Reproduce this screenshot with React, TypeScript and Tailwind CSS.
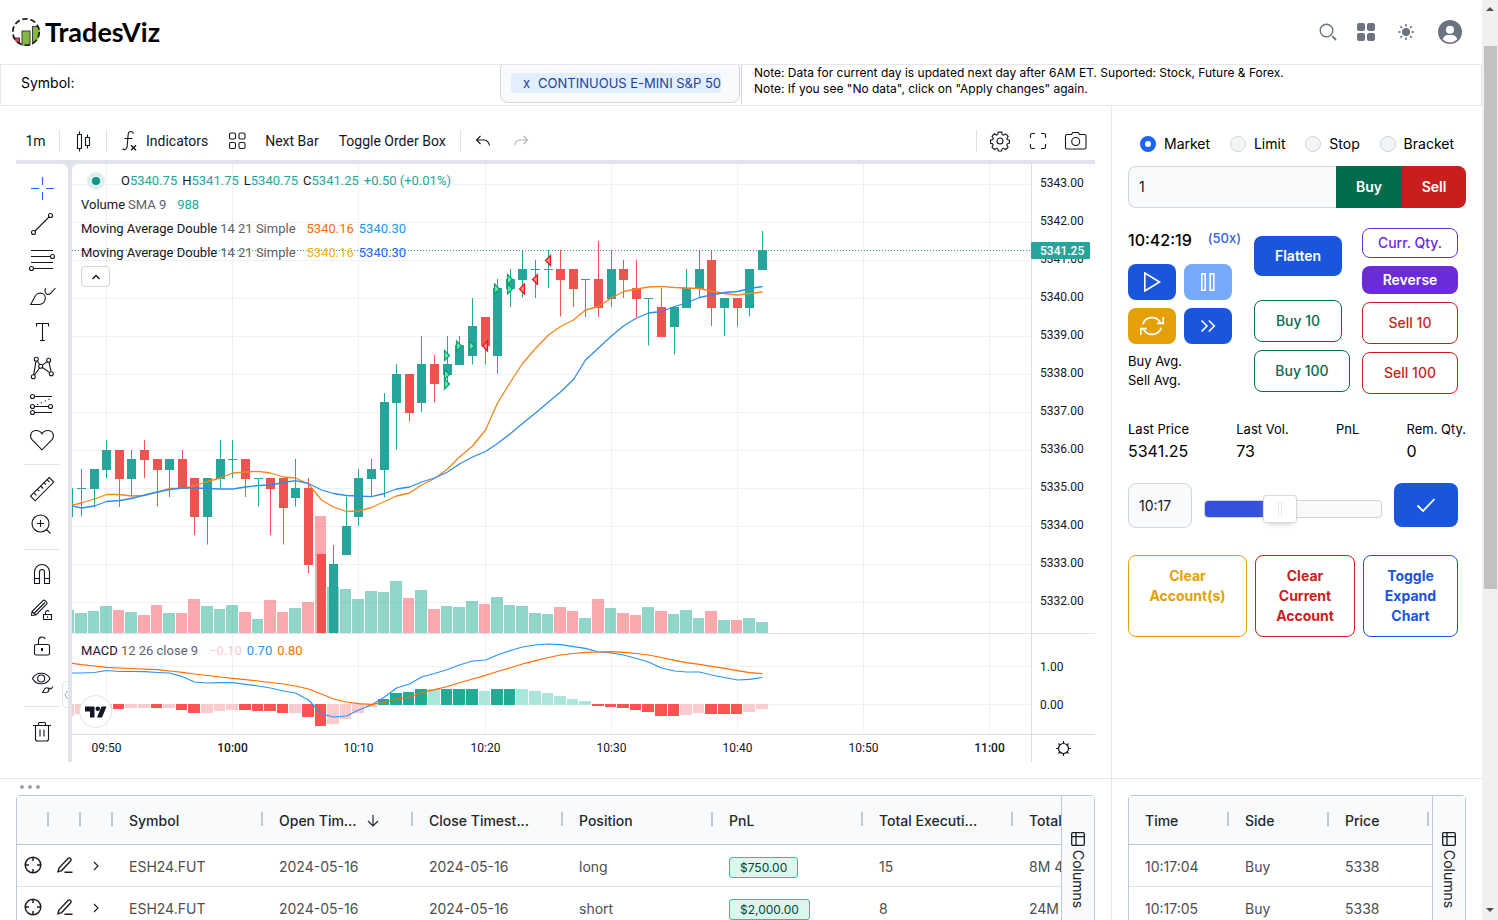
import React from "react";
import { clsx } from "clsx";

type Candle = [open: number, close: number, high: number, low: number, volume: number];

const FIRST = -13;
const STEP = 12.61;
const TOP = 164;

// minutes relative to 10:00, prices are offsets from 5300
const CANDLES: Candle[] = [
  [34.25, 35, 35, 34.25, 23],
  [35, 35, 35.5, 34.25, 20],
  [35, 35.5, 35.5, 34.5, 22],
  [35.5, 36, 36.25, 35.25, 27],
  [36, 35.25, 36, 34.5, 23],
  [35.25, 35.75, 36, 34.75, 21],
  [36, 35.75, 36.25, 35.25, 18],
  [35.75, 35.5, 35.75, 34.5, 28],
  [35.5, 35.75, 35.75, 34.75, 20],
  [35.75, 35, 36, 35, 20],
  [35.25, 34.25, 35.25, 33.75, 34],
  [34.25, 35.25, 35.25, 33.5, 27],
  [35.25, 35.75, 36.25, 35, 24],
  [35.75, 35.75, 36.25, 35.25, 28],
  [35.75, 35.25, 35.75, 34.75, 21],
  [35.25, 35.25, 35.25, 34.5, 14],
  [35.25, 35, 35.25, 33.75, 33],
  [35.25, 34.5, 35.25, 33.5, 21],
  [34.75, 35, 35.75, 34.5, 25],
  [35, 33, 35.25, 32.75, 31],
  [33.25, 31, 33.25, 31, 117],
  [31, 33, 33.5, 31, 46],
  [33.25, 34, 34.75, 33.25, 44],
  [34.25, 35.25, 35.5, 34, 34],
  [35.25, 35.5, 35.75, 34.75, 42],
  [35.5, 37.25, 37.5, 34.75, 41],
  [37.25, 38, 38.25, 36, 52],
  [38, 37, 38, 36.75, 35],
  [37.25, 38.25, 39, 37, 43],
  [38.25, 37.75, 38.5, 37.25, 24],
  [38, 38.25, 39, 37.75, 27],
  [38.25, 38.75, 39, 38.25, 26],
  [38.5, 39.25, 40, 38.25, 32],
  [39.5, 38.75, 39.5, 38.25, 29],
  [38.5, 40.25, 40.5, 38, 36],
  [40.25, 40.5, 40.75, 39.75, 28],
  [40.5, 40.75, 41.25, 40, 27],
  [40.75, 40.75, 41, 40, 20],
  [40.75, 40.75, 41.25, 40.25, 19],
  [40.75, 40.5, 41.25, 39.5, 26],
  [40.75, 40.25, 40.75, 39.75, 22],
  [40.5, 40.5, 40.5, 39.5, 15],
  [40.5, 39.75, 41.5, 39.5, 34],
  [40, 40.75, 41.25, 39.75, 25],
  [40.75, 40.5, 41, 40, 20],
  [40.25, 40, 41, 39.5, 18],
  [40, 40, 40, 38.75, 26],
  [39.75, 39, 40.25, 39, 22],
  [39.25, 39.75, 39.75, 38.5, 19],
  [39.75, 40.25, 40.75, 39.75, 23],
  [40.25, 40.75, 41.25, 40, 15],
  [41, 39.75, 41.25, 39.25, 22],
  [39.75, 40, 40, 39, 13],
  [40, 39.75, 40, 39.25, 13],
  [39.75, 40.75, 40.75, 39.5, 15],
  [40.75, 41.25, 41.75, 40.75, 11],
];

const MA_FAST = [
  506, 503, 499, 494.5, 494.5, 496, 495.5, 492, 488.5, 488.3, 486, 481.5, 478, 473, 472, 471.3, 473, 477,
  478, 484, 500, 507, 511.5, 511, 507.5, 501.5, 496, 493, 485, 478.5, 469, 457, 446, 430, 403, 382, 363.5,
  348.5, 335, 326.5, 320, 310, 306.5, 298, 291.5, 289, 287, 286.3, 287.5, 288, 288.5, 291, 293.5, 295,
  293.5, 292,
];

const MA_SLOW = [
  505, 508, 506, 501.5, 500.5, 498.5, 495, 492, 489.5, 488, 488, 488.5, 489, 489, 487, 485.5, 485, 482.5,
  480.7, 483.5, 490, 493.5, 495.5, 496, 496.7, 493.5, 489, 487, 482, 478, 472, 464, 457, 451.5, 443.5,
  433.5, 423.5, 413, 402, 392, 379.5, 360, 348, 336, 326, 318, 313, 311.5, 306.5, 303, 297.5, 295, 292.5,
  291.5, 288.5, 286.5,
];

const MACD_LINE = [
  673, 673, 672.5, 670.5, 671.5, 671.5, 671.7, 672.5, 673, 676.7, 682, 683, 682.7, 682.7, 684.3, 686, 688,
  691, 693, 700, 714, 717, 716, 710, 705, 697, 688, 684, 677, 673.5, 669.5, 665, 661, 660, 655, 650.5, 647,
  645, 644, 644.7, 646.7, 648.3, 652, 653, 655, 658.5, 662, 668, 671, 672, 672, 675, 677.5, 680, 679.3,
  677.5,
];

const SIGNAL_LINE = [
  663, 664.7, 666, 667.3, 668, 668.5, 669.1, 669.7, 671, 672.3, 674, 675.5, 677, 678.3, 679.6, 681, 682.5,
  684, 686, 689, 694, 699, 702, 703.7, 704.3, 702.5, 699, 697, 692.7, 689.6, 686.5, 682.8, 679, 675.3,
  671.5, 667.8, 664, 660.7, 657.5, 655, 653.5, 652.4, 652, 651.7, 652.3, 653.5, 655, 657.5, 660.3, 662.7,
  664.3, 666.3, 668.3, 670.7, 672.7, 673.7,
];

const HISTOGRAM = [
  -12, -10, -8, -6, -5, -4, -4, -4, -4, -6, -9, -9, -7, -6, -6, -7, -7, -9, -9, -13, -22, -20, -15, -9, -3,
  6, 12, 13, 16, 16, 16, 16, 16, 14, 16, 16, 16, 14, 12, 9, 6, 4, -2, -3, -4, -6, -8, -12, -12, -11, -9,
  -10, -10, -10, -8, -5,
];

// bars drawn in the strong colour, the rest are fading
const STRONG = [
  -9, -6, -4, -3, 1, 2, 3, 4, 6, 7, 12, 13, 14, 15, 17, 18, 19, 21, 22, 29, 30, 31, 32, 33, 34, 35, 38, 39,
  40,
];

const FILLS: [number, number, "buy" | "sell"][] = [
  [17, 38.5, "buy"],
  [17, 38, "buy"],
  [17, 37.75, "buy"],
  [18, 38.75, "buy"],
  [19, 38.75, "buy"],
  [20, 38.75, "sell"],
  [21, 40.25, "buy"],
  [22, 40.5, "buy"],
  [22, 40.25, "buy"],
  [23, 40.25, "sell"],
  [24, 40.5, "sell"],
  [25, 41, "sell"],
];

const timeX = (i: number) => Math.floor(160.8 + STEP * i) + 0.5;
const priceY = (p: number) => 20.5 + (43 - p) * 38;

const toPoints = (ys: number[]) => ys.map((y, n) => `${timeX(n + FIRST)},${y - TOP}`).join(" ");

const PRICES = [43, 42, 41, 40, 39, 38, 37, 36, 35, 34, 33, 32];
const TIMES = [
  { at: -10, label: "09:50" },
  { at: 0, label: "10:00", bold: true },
  { at: 10, label: "10:10" },
  { at: 20, label: "10:20" },
  { at: 30, label: "10:30" },
  { at: 40, label: "10:40" },
  { at: 50, label: "10:50" },
  { at: 60, label: "11:00", bold: true },
];

const Plot = () => {
  return (
    <svg className="block w-full h-[598px]" role="img" aria-label="Price chart">
      <g stroke="#f0f1f2">
        {TIMES.map((t) => (
          <line key={t.label} x1={timeX(t.at)} x2={timeX(t.at)} y1="0" y2="570" />
        ))}
        {PRICES.map((p) => (
          <line key={p} x1="0" x2="100%" y1={priceY(p)} y2={priceY(p)} />
        ))}
        <line x1="0" x2="100%" y1="502.5" y2="502.5" />
        <line x1="0" x2="100%" y1="540.5" y2="540.5" />
      </g>

      {CANDLES.map(([open, close, , , volume], n) => {
        const x = timeX(n + FIRST);
        return (
          <rect
            key={n}
            x={x - 6.5}
            y={469 - volume}
            width={timeX(n + FIRST + 1) - x - 1}
            height={volume}
            fill={close >= open ? "#22ab94" : "#f7525f"}
            fillOpacity="0.5"
          />
        );
      })}

      {CANDLES.map(([open, close, high, low], n) => {
        const x = timeX(n + FIRST);
        const top = Math.ceil(priceY(Math.max(open, close))) - 1;
        const bottom = Math.min(469, Math.ceil(priceY(Math.min(open, close))));
        const color = close >= open ? "#26a69a" : "#ef5350";
        return (
          <g key={n} fill={color}>
            <rect
              x={x - 0.5}
              y={Math.ceil(priceY(high)) - 1}
              width="1"
              height={Math.min(469, priceY(low)) - priceY(high)}
            />
            <rect x={x - 4.5} y={top} width="9" height={bottom - top} />
          </g>
        );
      })}

      <g fill="none" strokeLinejoin="round">
        <polyline points={toPoints(MA_FAST)} stroke="#f7861b" strokeWidth="1.3" />
        <polyline points={toPoints(MA_SLOW)} stroke="#2f8cf0" strokeWidth="1.3" />
      </g>

      {FILLS.map(([i, price, side]) => (
        <path
          key={`${i}-${price}`}
          transform={`translate(${timeX(i) - 0.5} ${priceY(price)})`}
          d={side === "buy" ? "M-2.5 -5L2.5 0L-2.5 5Z" : "M2.5 -5L-2.5 0L2.5 5Z"}
          fill={side === "buy" ? "#5ff0a4" : "#ff8f8f"}
          stroke={side === "buy" ? "#0c9c74" : "#f2101f"}
          strokeWidth="1.2"
        />
      ))}

      <line x1="0" x2="100%" y1="86.5" y2="86.5" stroke="#26a69a" strokeDasharray="1 2" />
      <line x1="0" x2="100%" y1="469.5" y2="469.5" stroke="#e0e3eb" />

      {HISTOGRAM.map((h, n) => {
        const i = n + FIRST;
        const x = timeX(i);
        const strong = STRONG.includes(i);
        const color = h > 0 ? (strong ? "#22ab94" : "#ace5dc") : strong ? "#ff5252" : "#fccbcd";
        return (
          <rect
            key={n}
            x={x - 6.5}
            y={h > 0 ? 541 - h : 540}
            width={timeX(i + 1) - x - 1}
            height={Math.abs(h)}
            fill={color}
          />
        );
      })}
      <g fill="none" strokeLinejoin="round">
        <polyline points={toPoints(MACD_LINE)} stroke="#2b95f5" strokeWidth="1.2" />
        <polyline points={toPoints(SIGNAL_LINE)} stroke="#ff6d00" strokeWidth="1.2" />
      </g>

      <line x1="0" x2="100%" y1="570.5" y2="570.5" stroke="#dcdde1" />
      <g fontSize="12" textAnchor="middle" fill="#131722">
        {TIMES.map((t) => (
          <text key={t.label} x={timeX(t.at)} y="588" fontWeight={t.bold ? 500 : 400}>
            {t.label}
          </text>
        ))}
      </g>
    </svg>
  );
};

const PriceAxis = () => {
  return (
    <svg className="block w-16 h-[598px] shrink-0" aria-label="Price axis">
      <line x1="0.5" x2="0.5" y1="0" y2="598" stroke="#dcdde1" />
      <g fontSize="12" fill="#131722">
        {PRICES.map((p) => (
          <text key={p} x="9" y={Math.floor(priceY(p)) + 3}>
            {`53${p}.00`}
          </text>
        ))}
        <text x="9" y="507">1.00</text>
        <text x="9" y="545">0.00</text>
      </g>
      <line x1="0" x2="64" y1="469.5" y2="469.5" stroke="#e0e3eb" />
      <line x1="0" x2="64" y1="570.5" y2="570.5" stroke="#dcdde1" />
      <rect x="0" y="78" width="59" height="17" rx="1" fill="#26a69a" />
      <text x="9" y="91" fontSize="12" fontWeight="500" fill="#fff">
        5341.25
      </text>
      <g transform="translate(32.5 584.5)" fill="none" stroke="#131722" strokeWidth="1.2">
        <circle r="5" />
        <path d="M0 -5V-7.5M0 5V7.5M-5 0H-7.5M5 0H7.5M-3.5 -3.5L-5 -5M3.5 -3.5L5 -5M-3.5 3.5L-5 5M3.5 3.5L5 5" />
      </g>
    </svg>
  );
};

interface IconProps {
  children: React.ReactNode;
  className?: string;
}

const Icon = ({ children, className }: IconProps) => (
  <svg
    viewBox="0 0 28 28"
    className={clsx("size-7 shrink-0", className)}
    fill="none"
    stroke="currentColor"
    strokeWidth="1.1"
    aria-hidden="true"
  >
    {children}
  </svg>
);

const TOOLS: { label: string; icon: React.ReactNode; divider?: boolean; active?: boolean }[] = [
  {
    label: "Cross",
    active: true,
    icon: <path d="M3 14.5h8M18 14.5h8M14.5 3v8M14.5 18v8" />,
  },
  {
    label: "Trend line",
    icon: (
      <>
        <path d="M7 21L21 7" />
        <circle cx="22.5" cy="5.5" r="2" />
        <circle cx="5.5" cy="22.5" r="2" />
      </>
    ),
  },
  {
    label: "Fib retracement",
    icon: (
      <>
        <path d="M3 4.5h22M3 10.5h19.5M3 16.5h22M5.5 22.5H25" />
        <circle cx="24.5" cy="10.5" r="2" />
        <circle cx="3.5" cy="22.5" r="2" />
      </>
    ),
  },
  {
    label: "Brush",
    icon: (
      <path d="M2.7 22.5L7 14.5C8.5 11.8 10.6 11 12.5 11C15.5 11.2 17.4 13.5 17.3 16C17 20 14.5 22.5 11 22.5ZM18 6c-1.8 2-1.2 4.7.8 6c1.5.8 2.6.5 3.6-.5L27.5 6" />
    ),
  },
  {
    label: "Text",
    icon: <path d="M8.5 8.5v-3h12v3M14.5 5.5v17M12 22.5h5" />,
  },
  {
    label: "XABCD pattern",
    icon: (
      <>
        <path d="M5.6 20.8L8 7.3M9.4 7L11.7 10.7M14.4 13.5L21.7 18.6M23 17.7L21 8.3M19.2 7.6L14.3 11.1M11.6 14L6.5 21" />
        <circle cx="8.3" cy="5.3" r="2" />
        <circle cx="20.7" cy="6.3" r="2" />
        <circle cx="12.7" cy="12.3" r="2" />
        <circle cx="23.3" cy="19.7" r="2" />
        <circle cx="5.3" cy="22.7" r="2" />
      </>
    ),
  },
  {
    label: "Long position",
    icon: (
      <>
        <path d="M6.5 6.5H24M6.5 16.5h14M6.5 22.5H24" />
        <path d="M9 14.7L23 8.5" strokeDasharray="1.2 3" />
        <circle cx="4.5" cy="6.5" r="2" />
        <circle cx="4.5" cy="16.5" r="2" />
        <circle cx="22.5" cy="16.5" r="2" />
        <circle cx="4.5" cy="22.5" r="2" />
      </>
    ),
  },
  {
    label: "Favorites",
    icon: (
      <path d="M14 23.8L4 13.6C1 10 3 4.5 8 4.5C11 4.5 13 5.8 14 7.8C15 5.8 17 4.5 20 4.5C25 4.5 27 10 24 13.6Z" />
    ),
    divider: true,
  },
  {
    label: "Measure",
    icon: (
      <path d="M2.5 21.2L21.2 2.5L25.8 7.1L7.1 25.8ZM6 17.8L8.5 20.3M9.5 14.3L11.3 16.1M12.7 11L15.2 13.5M16 7.7L17.8 9.5M19 4.7L21.5 7.2" />
    ),
  },
  {
    label: "Zoom in",
    icon: <path d="M12.5 4a8.5 8.5 0 1 0 0 17a8.5 8.5 0 1 0 0-17M18.6 18.6L22.5 22.5M12.5 9v7M9 12.5h7" />,
    divider: true,
  },
  {
    label: "Magnet",
    icon: (
      <path d="M6.5 23.5V12a7.5 7.5 0 0 1 15 0V23.5h-5V12a2.5 2.5 0 0 0-5 0V23.5ZM6.5 18.5h5M16.5 18.5h5" />
    ),
  },
  {
    label: "Stay in drawing mode",
    icon: (
      <>
        <path d="M3.5 19.5L4 15.5L15 4.6Q16 3.6 17 4.6L18.600 6.200Q19.600 7.200 18.600 8.200L8 19ZM4 15.5L8 19M6.500 17L17 6.500" />
        <path d="M15.5 18.5h8v5h-8zM17.5 18.5v-2a2 2 0 0 1 3.600-1M19.500 20.200v1.600" />
      </>
    ),
  },
  {
    label: "Lock all drawings",
    icon: (
      <>
        <path d="M8 12.5h12a1.5 1.5 0 0 1 1.5 1.5v7.500a1.500 1.500 0 0 1-1.500 1.500H8a1.500 1.500 0 0 1-1.500-1.500V14A1.500 1.500 0 0 1 8 12.500ZM10.500 12.500V8.500a3.600 3.600 0 0 1 6.800-1.500" />
        <path d="M14 16v3" strokeWidth="2" />
      </>
    ),
  },
  {
    label: "Hide all drawings",
    icon: (
      <>
        <path d="M4.5 10.5C8 3.5 18.5 3.5 22 10.5C18.5 17.5 8 17.5 4.5 10.5Z" />
        <circle cx="13.2" cy="10.5" r="3.5" />
        <path d="M14.5 24.5L17 20.5q2-1.6 3.6.2q1 2-1.2 3.6ZM21 19.5q.3 2 2.4 1L25 18.5" />
      </>
    ),
    divider: true,
  },
  {
    label: "Remove drawings",
    icon: (
      <path d="M5 8.5h18M10.5 8.5v-2a1 1 0 0 1 1-1h5a1 1 0 0 1 1 1v2M7.5 8.5v13.5a2 2 0 0 0 2 2h9a2 2 0 0 0 2-2V8.500M12 12.500v7M16 12.500v7" />
    ),
  },
];

const DrawingTools = () => {
  return (
    <div className="w-[52px] shrink-0 pt-[6px] bg-white rounded-tr-md relative overflow-hidden">
      {TOOLS.map((tool) => (
        <React.Fragment key={tool.label}>
          <button
            type="button"
            aria-label={tool.label}
            className={clsx("h-9 w-full flex items-center justify-center", {
              "text-[#2962ff]": tool.active,
              "text-[#131722]": !tool.active,
            })}
          >
            <Icon>{tool.icon}</Icon>
          </button>
          {tool.divider && <div className="h-px my-[6px] mx-2 bg-[#e0e3eb]" />}
        </React.Fragment>
      ))}
      <button
        type="button"
        aria-label="Hide drawings toolbar"
        className="absolute -right-1 top-[517px] w-[10px] h-[27px] border border-[#e0e3eb] rounded-l bg-white text-[#a3a6af]"
      >
        <svg viewBox="0 0 6 10" className="w-[6px] h-[10px]" fill="none" stroke="currentColor">
          <path d="M4.5 1L2 5L4.5 9" />
        </svg>
      </button>
    </div>
  );
};

const Divider = () => <div className="w-px h-[22px] bg-[#e0e3eb]" />;

const ChartToolbar = () => {
  return (
    <div className="h-[38px] flex items-center text-sm text-[#131722]">
      <button type="button" className="w-[43px] text-center pr-1">
        1m
      </button>
      <Divider />
      <button type="button" aria-label="Candles" className="w-[46px] flex justify-center">
        <Icon>
          <path d="M8.5 7.5h4v14h-4zM10.5 4.5v3M10.5 21.5v3M16.5 10.5h4v8h-4zM18.5 7.5v3M18.5 18.5v3" />
        </Icon>
      </button>
      <Divider />
      <button type="button" className="flex items-center pl-[9px] pr-[15px]">
        <Icon>
          <path d="M17.500 6.500q-.8-2-2.600-2q-2.600 0-2.800 3.500L11.200 19q-.3 3.600-2.600 3.600q-1.300 0-1.900-1M8.500 11.500h8" />
          <path d="M15 18.200l5 5M20 18.200l-5 5" strokeWidth="1.4" />
        </Icon>
        <span className="ml-[2px]">Indicators</span>
      </button>
      <button type="button" aria-label="Layouts">
        <Icon>
          <g transform="translate(.5 0)">
            <rect x="6" y="6" width="6" height="6" rx="1.4" />
            <rect x="15.5" y="6" width="6" height="6" rx="1.4" />
            <rect x="6" y="15.5" width="6" height="6" rx="1.4" />
            <rect x="15.5" y="15.5" width="6" height="6" rx="1.4" />
          </g>
        </Icon>
      </button>
      <button type="button" className="ml-1 px-[10px] whitespace-nowrap">
        Next Bar
      </button>
      <button type="button" className="px-[10px] whitespace-nowrap">
        Toggle Order Box
      </button>
      <div className="pl-1 pr-2">
        <Divider />
      </div>
      <button type="button" aria-label="Undo">
        <Icon>
          <path d="M11.5 9L7.5 13L11.5 17M7.5 13H15.5Q19.5 13.5 20.5 18.5" />
        </Icon>
      </button>
      <button type="button" aria-label="Redo" disabled className="ml-[10px] text-[#b2b5be]">
        <Icon>
          <path d="M16.5 9L20.5 13L16.5 17M20.5 13H12.5Q8.5 13.5 7.5 18.5" />
        </Icon>
      </button>
      <div className="ml-auto">
        <Divider />
      </div>
      <div className="flex items-center gap-[10px] pl-[9px] pr-[5px]">
        <button type="button" aria-label="Settings">
          <Icon>
            <g transform="translate(14 14) scale(.86) translate(-14 -14.8)" strokeWidth="1.3">
              <circle cx="14" cy="14.8" r="3.5" />
              <path d="M12 4.5h4l.6 2.8l1.6.7l2.4-1.5l2.9 2.9l-1.5 2.4l.7 1.5l2.3.6v3.4l-2.5.8l-.6 1.6l1.5 2.3l-2.700 2.700l-2.500-1.400l-1.600.6l-.7 2.600h-3.800l-.7-2.600l-1.600-.6l-2.400 1.400l-2.700-2.700l1.400-2.400l-.6-1.500l-2.500-.7v-3.500l2.500-.7l.6-1.500l-1.400-2.400l2.700-2.900l2.400 1.500l1.600-.7Z" />
            </g>
          </Icon>
        </button>
        <button type="button" aria-label="Fullscreen">
          <Icon>
            <path d="M6.5 11V8a1.5 1.5 0 0 1 1.5-1.5h3M17 6.5h3A1.5 1.5 0 0 1 21.5 8v3M21.5 17v3a1.5 1.5 0 0 1-1.5 1.5h-3M11 21.5H8A1.5 1.5 0 0 1 6.5 20v-3" />
          </Icon>
        </button>
        <button type="button" aria-label="Take a snapshot">
          <Icon>
            <path d="M9.5 7.5L10.7 5.5H16.3L17.5 7.5H22.5a1.5 1.5 0 0 1 1.5 1.5V20.5a1.5 1.5 0 0 1-1.5 1.5H5a1.5 1.5 0 0 1-1.5-1.5V9A1.5 1.5 0 0 1 5 7.5Z" />
            <circle cx="13.7" cy="14.5" r="4" />
          </Icon>
        </button>
      </div>
    </div>
  );
};

const LegendRow = ({ children }: { children: React.ReactNode }) => (
  <div className="h-6 flex items-center gap-[3px] whitespace-nowrap">{children}</div>
);

const ChartLegend = () => {
  return (
    <div className="absolute left-[9px] top-[5px] text-[13px] text-[#131722]">
      <div className="h-6 flex items-center gap-[5px] whitespace-nowrap">
        <span className="size-[18px] ml-[6px] mr-[11px] rounded-full bg-[#dcf1ee] flex items-center justify-center">
          <span className="size-2 rounded-full bg-[#089981]" />
        </span>
        {[
          ["O", "5340.75"],
          ["H", "5341.75"],
          ["L", "5340.75"],
          ["C", "5341.25"],
        ].map(([name, value]) => (
          <span key={name}>
            {name}
            <span className="text-[#26a69a]">{value}</span>
          </span>
        ))}
        <span className="text-[#26a69a]">+0.50 (+0.01%)</span>
      </div>
      <LegendRow>
        Volume <span className="text-[#5d606b]">SMA 9</span>
        <span className="ml-2 text-[#26a69a]">988</span>
      </LegendRow>
      <LegendRow>
        Moving Average Double <span className="text-[#5d606b]">14 21 Simple</span>
        <span className="ml-2 text-[#ff6d00]">5340.16</span>
        <span className="ml-[2px] text-[#2196f3]">5340.30</span>
      </LegendRow>
      <LegendRow>
        Moving Average Double <span className="text-[#5d606b]">14 21 Simple</span>
        <span className="ml-2 text-[#fbb500]">5340.16</span>
        <span className="ml-[2px] text-[#2962ff]">5340.30</span>
      </LegendRow>
      <button
        type="button"
        aria-label="Hide indicators legend"
        className="mt-px w-[29px] h-[21px] border border-[#d1d4dc] rounded bg-white flex items-center justify-center"
      >
        <svg viewBox="0 0 10 6" className="w-[10px] h-[6px]" fill="none" stroke="#131722" strokeWidth="1.4">
          <path d="M1.5 5L5 1.5L8.5 5" />
        </svg>
      </button>
    </div>
  );
};

const ChartPanel = () => {
  return (
    <section className="flex-1 min-w-0 p-4 font-[Roboto,sans-serif]">
      <ChartToolbar />
      <div className="pt-1 bg-[#e0e3eb] flex gap-1">
        <DrawingTools />
        <div className="flex-1 min-w-0 bg-white flex rounded-tl-md overflow-hidden">
          <div className="flex-1 min-w-0 relative">
            <Plot />
            <ChartLegend />
            <div className="absolute left-[9px] top-[475px] text-[13px] text-[#131722]">
              <LegendRow>
                MACD <span className="text-[#5d606b]">12 26 close 9</span>
                <span className="ml-2 text-[#fccbcd]">−0.10</span>
                <span className="ml-[2px] text-[#2196f3]">0.70</span>
                <span className="ml-[2px] text-[#ff6d00]">0.80</span>
              </LegendRow>
            </div>
            <a
              href="#chart"
              aria-label="TradingView"
              className="absolute left-[7px] top-[531px] size-[33px] rounded-full border border-[#e0e3eb] bg-white flex items-center justify-center"
            >
              <svg viewBox="0 0 22 12" className="w-[22px] h-3" fill="#131722">
                <path d="M0 .5H9.5V11.5H5V5.5H0ZM16.5 .5H21.5L17 11.5H12Z" />
                <circle cx="12.8" cy="2.8" r="2.3" />
              </svg>
            </a>
          </div>
          <PriceAxis />
        </div>
      </div>
    </section>
  );
};

const ORDER_TYPES = ["Market", "Limit", "Stop", "Bracket"];

const OUTLINE = "rounded-lg border text-sm font-medium text-center";

const OrderPanel = () => {
  return (
    <section className="w-[371px] shrink-0 border-l border-[#e5e7eb] px-4 pt-7 text-black">
      <div className="flex items-center justify-between px-3 h-5 text-sm">
        {ORDER_TYPES.map((type) => (
          <label key={type} className="flex items-center gap-2">
            <input
              type="radio"
              name="order-type"
              defaultChecked={type === "Market"}
              className="appearance-none size-4 rounded-full border border-[#d1d5db] bg-[#f3f4f6] checked:border-[5px] checked:border-[#1c64f2] checked:bg-white"
            />
            {type}
          </label>
        ))}
      </div>

      <div className="mt-3 flex h-[42px]">
        <input
          type="text"
          aria-label="Quantity"
          defaultValue="1"
          className="flex-1 min-w-0 px-[10px] text-sm rounded-l-lg border border-r-0 border-[#d1d5db] bg-[#f9fafb] text-[#111928]"
        />
        <button type="button" className="w-[66px] bg-[#046c4e] text-white text-sm font-semibold">
          Buy
        </button>
        <button type="button" className="w-16 rounded-r-lg bg-[#c81e1e] text-white text-sm font-semibold">
          Sell
        </button>
      </div>

      <div className="mt-5 flex items-start">
        <div className="w-[126px]">
          <div className="flex h-9 pt-[2px] gap-4">
            <span className="text-base font-medium leading-5">10:42:19</span>
            <span className="text-[13px] leading-4 font-medium text-[#3461e8]">(50x)</span>
          </div>
          <div className="grid grid-cols-[48px_48px] gap-2">
            <button
              type="button"
              aria-label="Play"
              className="h-9 rounded-lg bg-[#1a56db] text-white flex items-center justify-center"
            >
              <svg viewBox="0 0 20 20" className="size-5" fill="none" stroke="currentColor" strokeWidth="1.6">
                <path d="M2.8 1L17.5 10L2.8 19Z" />
              </svg>
            </button>
            <button
              type="button"
              aria-label="Pause"
              className="h-9 rounded-lg bg-[#76a9fa] text-white flex items-center justify-center"
            >
              <svg viewBox="0 0 20 20" className="size-5" fill="none" stroke="currentColor" strokeWidth="1.6">
                <path d="M3.8 1.8h3.4v16.4H3.800zM12.200 1.800h3.600v16.400h-3.600z" />
              </svg>
            </button>
            <button
              type="button"
              aria-label="Reset"
              className="h-9 rounded-lg bg-[#e3a008] text-white flex items-center justify-center"
            >
              <svg viewBox="0 0 24 20" className="w-6 h-5" fill="none" stroke="currentColor" strokeWidth="1.7">
                <path d="M2.8 8.2A9.6 9.6 0 0 1 20.5 6.8M23.2 1V7.3H17M21.2 11.8A9.6 9.6 0 0 1 3.5 13.2M.8 19V12.7H7" />
              </svg>
            </button>
            <button
              type="button"
              aria-label="Fast forward"
              className="h-9 rounded-lg bg-[#1a56db] text-white flex items-center justify-center"
            >
              <svg viewBox="0 0 16 14" className="w-4 h-[14px]" fill="none" stroke="currentColor" strokeWidth="1.6">
                <path d="M1.5 1.5L7 7L1.5 12.5M8.8 1.5L14.3 7L8.8 12.5" />
              </svg>
            </button>
          </div>
          <div className="mt-2 text-[13px] leading-[19px]">
            <p>Buy Avg.</p>
            <p>Sell Avg.</p>
          </div>
        </div>

        <div className="w-[108px] pt-2 flex flex-col items-start">
          <button type="button" className="w-[88px] h-10 rounded-lg bg-[#1a56db] text-white text-sm font-semibold">
            Flatten
          </button>
          <button type="button" className={clsx(OUTLINE, "mt-6 w-[88px] h-[42px] border-[#046c4e] text-[#046c4e]")}>
            Buy 10
          </button>
          <button type="button" className={clsx(OUTLINE, "mt-2 w-24 h-[42px] border-[#046c4e] text-[#046c4e]")}>
            Buy 100
          </button>
        </div>

        <div className="w-24 flex flex-col gap-2">
          <button type="button" className={clsx(OUTLINE, "h-[30px] border-[#6c2bd9] text-[#6c2bd9]")}>
            Curr. Qty.
          </button>
          <button type="button" className="h-7 rounded-lg bg-[#6c2bd9] text-white text-sm font-semibold">
            Reverse
          </button>
          <button type="button" className={clsx(OUTLINE, "h-[42px] border-[#c81e1e] text-[#c81e1e]")}>
            Sell 10
          </button>
          <button type="button" className={clsx(OUTLINE, "h-[42px] border-[#c81e1e] text-[#c81e1e]")}>
            Sell 100
          </button>
        </div>
      </div>

      <dl className="mt-[25px] flex justify-between">
        {[
          ["Last Price", "5341.25"],
          ["Last Vol.", "73"],
          ["PnL", ""],
          ["Rem. Qty.", "0"],
        ].map(([name, value]) => (
          <div key={name} className="h-[44px]">
            <dt className="text-[13px] leading-5">{name}</dt>
            <dd className="text-base leading-6">{value}</dd>
          </div>
        ))}
      </dl>

      <div className="mt-5 pr-2 flex items-start">
        <input
          type="text"
          aria-label="Replay time"
          defaultValue="10:17"
          className="w-16 h-[45px] px-[10px] text-sm rounded-lg border border-[#d1d5db] bg-[#f9fafb] text-[#111928]"
        />
        <input
          type="range"
          aria-label="Replay position"
          min="0"
          max="100"
          defaultValue="41"
          className="appearance-none bg-transparent mx-3 mt-3 flex-1 min-w-0 h-7 [&::-webkit-slider-runnable-track]:h-[18px] [&::-webkit-slider-runnable-track]:rounded [&::-webkit-slider-runnable-track]:border [&::-webkit-slider-runnable-track]:border-[#d3d3d3] [&::-webkit-slider-runnable-track]:bg-[linear-gradient(to_right,#3451db_40%,#fafafa_40%)] [&::-webkit-slider-thumb]:appearance-none [&::-webkit-slider-thumb]:-mt-[6px] [&::-webkit-slider-thumb]:w-[34px] [&::-webkit-slider-thumb]:h-7 [&::-webkit-slider-thumb]:rounded-[3px] [&::-webkit-slider-thumb]:border [&::-webkit-slider-thumb]:border-[#d9d9d9] [&::-webkit-slider-thumb]:bg-white [&::-webkit-slider-thumb]:bg-[linear-gradient(to_right,#e8e7e6_1px,transparent_1px,transparent_3px,#e8e7e6_3px)] [&::-webkit-slider-thumb]:bg-[length:4px_14px] [&::-webkit-slider-thumb]:bg-center [&::-webkit-slider-thumb]:bg-no-repeat [&::-webkit-slider-thumb]:shadow-[0_3px_6px_-3px_#bbb]"
        />
        <button
          type="button"
          aria-label="Apply"
          className="w-16 h-11 rounded-lg bg-[#1a56db] text-white flex items-center justify-center"
        >
          <svg viewBox="0 0 20 16" className="w-5 h-4" fill="none" stroke="currentColor" strokeWidth="1.8">
            <path d="M1.5 8.5L7 14L18.5 2" />
          </svg>
        </button>
      </div>

      <div className="mt-[27px] pr-2 grid grid-cols-[119fr_100fr_95fr] gap-2 text-sm font-bold">
        <button type="button" className="h-[82px] px-4 rounded-lg border border-[#e3a008] text-[#e3a008] flex justify-center pt-[10px]">
          Clear Account(s)
        </button>
        <button type="button" className="h-[82px] px-4 rounded-lg border border-[#c81e1e] text-[#c81e1e]">
          Clear Current Account
        </button>
        <button type="button" className="h-[82px] px-4 rounded-lg border border-[#1a56db] text-[#1a56db]">
          Toggle Expand Chart
        </button>
      </div>
    </section>
  );
};

const ColumnsTab = () => (
  <button
    type="button"
    className="w-[33px] shrink-0 border-l border-[#bdc9d6] bg-[#f9fafb] flex flex-col items-center pt-9 gap-1 text-sm text-[#181d1f]"
  >
    <svg viewBox="0 0 14 14" className="size-[14px] shrink-0" fill="none" stroke="#181d1f" strokeWidth="1.3">
      <rect x=".7" y=".7" width="12.6" height="12.6" rx="1.2" />
      <path d="M.7 4.7H13.3M5 .7V13.3" />
    </svg>
    <span className="[writing-mode:vertical-rl]">Columns</span>
  </button>
);

const HeadCell = ({ children }: { children?: React.ReactNode }) => (
  <th className="h-12 p-0 font-medium text-left">
    <div className="flex items-center justify-between whitespace-nowrap">
      <span className="pl-4 pt-[2px] flex items-center gap-[10px]">{children}</span>
      <span className="-mt-[2px] w-[2px] h-[14px] shrink-0 bg-[#bdc9d6]" />
    </div>
  </th>
);

const TRADES = [
  { symbol: "ESH24.FUT", open: "2024-05-16", close: "2024-05-16", position: "long", pnl: "$750.00", executions: "15", time: "8M 4" },
  { symbol: "ESH24.FUT", open: "2024-05-16", close: "2024-05-16", position: "short", pnl: "$2,000.00", executions: "8", time: "24M" },
];

const CELL = "pt-1 pb-0 px-4";

const TradesTable = () => {
  return (
    <section className="flex-1 min-w-0 px-4 pt-4 relative">
      <button type="button" aria-label="Resize table" className="absolute left-5 top-[6px] flex gap-1">
        <span className="size-1 rounded-full bg-[#9ca3af]" />
        <span className="size-1 rounded-full bg-[#9ca3af]" />
        <span className="size-1 rounded-full bg-[#9ca3af]" />
      </button>
      <div className="flex border border-[#bdc9d6] rounded-t">
        <div className="flex-1 min-w-0 overflow-hidden">
          <table className="table-fixed w-[1146px] text-sm text-[#4b4f52] border-collapse">
            <colgroup>
              <col className="w-8" />
              <col className="w-8" />
              <col className="w-8" />
              <col span={7} className="w-[150px]" />
            </colgroup>
            <thead className="bg-[#f9fafb] text-[#23282b]">
              <tr className="border-b border-[#bdc9d6]">
                <HeadCell />
                <HeadCell />
                <HeadCell />
                <HeadCell>Symbol</HeadCell>
                <HeadCell>
                  Open Tim...
                  <svg viewBox="0 0 12 12" className="size-3" fill="none" stroke="currentColor" strokeWidth="1.2">
                    <path d="M6 0V11M1 6L6 11L11 6" />
                  </svg>
                </HeadCell>
                <HeadCell>Close Timest...</HeadCell>
                <HeadCell>Position</HeadCell>
                <HeadCell>PnL</HeadCell>
                <HeadCell>Total Executi...</HeadCell>
                <HeadCell>Total</HeadCell>
              </tr>
            </thead>
            <tbody>
              {TRADES.map((trade) => (
                <tr key={trade.pnl} className="h-[42px] border-b border-[#dde2eb]">
                  <td className="p-0">
                    <button type="button" aria-label="Locate on chart" className="block mx-auto text-[#181d1f]">
                      <svg viewBox="0 0 18 18" className="size-[18px]" fill="none" stroke="currentColor" strokeWidth="1.5">
                        <circle cx="9" cy="9" r="7.8" />
                        <path d="M9 1V5M9 13V17M1 9H5M13 9H17" />
                      </svg>
                    </button>
                  </td>
                  <td className="p-0">
                    <button type="button" aria-label="Edit" className="block mx-auto text-[#181d1f]">
                      <svg viewBox="0 0 18 18" className="size-[18px]" fill="none" stroke="currentColor" strokeWidth="1.4">
                        <path d="M2 15.8L3 12L12 2.4Q13.3 1.3 14.6 2.5Q15.7 3.8 14.6 5.1L5.6 14.6ZM8.5 16.2H16.5" />
                      </svg>
                    </button>
                  </td>
                  <td className="pt-[2px] pb-0 pl-0 pr-[2px]">
                    <button type="button" aria-label="Expand row" className="block mx-auto">
                      <svg viewBox="0 0 6 10" className="w-[6px] h-[10px]" fill="none" stroke="#181d1f" strokeWidth="1.1">
                        <path d="M1 1L5 5L1 9" />
                      </svg>
                    </button>
                  </td>
                  <td className={CELL}>{trade.symbol}</td>
                  <td className={CELL}>{trade.open}</td>
                  <td className={CELL}>{trade.close}</td>
                  <td className={CELL}>{trade.position}</td>
                  <td className={CELL}>
                    <span className="block w-fit px-[10px] text-xs leading-[19px] rounded-[3px] border border-[#31c48d] bg-[#def7ec] text-[#014737]">
                      {trade.pnl}
                    </span>
                  </td>
                  <td className={CELL}>{trade.executions}</td>
                  <td className={CELL}>{trade.time}</td>
                </tr>
              ))}
            </tbody>
          </table>
        </div>
        <ColumnsTab />
      </div>
    </section>
  );
};

const EXECUTIONS = [
  ["10:17:04", "Buy", "5338"],
  ["10:17:05", "Buy", "5338"],
];

const ExecutionsTable = () => {
  return (
    <section className="w-[371px] shrink-0 border-l border-[#e5e7eb] px-4 pt-4">
      <div className="flex border border-[#bdc9d6] rounded-t">
        <div className="flex-1 min-w-0 overflow-hidden">
          <table className="table-fixed w-full text-sm text-[#4b4f52] border-collapse">
            <colgroup>
              <col className="w-[100px]" />
              <col className="w-[100px]" />
              <col className="w-[100px]" />
              <col />
            </colgroup>
            <thead className="bg-[#f9fafb] text-[#23282b]">
              <tr className="border-b border-[#bdc9d6]">
                <HeadCell>Time</HeadCell>
                <HeadCell>Side</HeadCell>
                <HeadCell>Price</HeadCell>
                <th />
              </tr>
            </thead>
            <tbody>
              {EXECUTIONS.map(([time, side, price]) => (
                <tr key={time} className="h-[42px] border-b border-[#dde2eb]">
                  <td className={CELL}>{time}</td>
                  <td className={CELL}>{side}</td>
                  <td className={CELL}>{price}</td>
                  <td />
                </tr>
              ))}
            </tbody>
          </table>
        </div>
        <ColumnsTab />
      </div>
    </section>
  );
};

const Logo = () => (
  <a href="#home" className="flex items-center gap-1 text-black">
    <svg viewBox="0 0 30 30" className="size-[30px]" aria-hidden="true">
      <clipPath id="ring">
        <circle cx="15" cy="15" r="14" />
      </clipPath>
      <g clipPath="url(#ring)" stroke="#3c3c3c">
        <rect x="2.5" y="21" width="6" height="10" fill="#d9464f" />
        <rect x="11" y="14" width="8" height="16" fill="#84b840" />
        <rect x="21.5" y="9.5" width="9" height="20" fill="#84b840" />
      </g>
      <circle
        cx="15"
        cy="15"
        r="13.2"
        fill="none"
        stroke="#222"
        strokeWidth="1.8"
        strokeDasharray="5.5 2.79"
      />
    </svg>
    <span className="font-[Lato,sans-serif] text-[27px] font-bold leading-8">TradesViz</span>
  </a>
);

const Header = () => {
  return (
    <header className="h-16 pl-[11px] pr-5 flex items-center justify-between">
      <Logo />
      <div className="flex items-center gap-5 text-[#6b7280]">
        <button type="button" aria-label="Search">
          <svg viewBox="0 0 18 18" className="size-[18px]" fill="none" stroke="currentColor" strokeWidth="1.4">
            <circle cx="7.5" cy="7.5" r="6.3" />
            <path d="M13.2 13.2L17 17" strokeWidth="1.8" />
          </svg>
        </button>
        <button type="button" aria-label="Apps">
          <svg viewBox="0 0 18 18" className="size-[18px]" fill="currentColor">
            <rect x="0" y="0" width="8" height="8" rx="2" />
            <rect x="10" y="0" width="8" height="8" rx="2" />
            <rect x="0" y="10" width="8" height="8" rx="2" />
            <rect x="10" y="10" width="8" height="8" rx="2" />
          </svg>
        </button>
        <button type="button" aria-label="Theme" className="pl-[2px] pr-[3px]">
          <svg viewBox="0 0 18 18" className="size-[18px]" fill="currentColor">
            <circle cx="9" cy="9" r="4" />
            <path
              d="M9 1V3.5M9 14.5V17M1 9H3.5M14.5 9H17M3.3 3.3L5 5M13 13L14.7 14.7M14.7 3.3L13 5M5 13L3.3 14.7"
              stroke="currentColor"
              strokeWidth="1.6"
            />
          </svg>
        </button>
        <button type="button" aria-label="Account">
          <svg viewBox="0 0 24 24" className="size-6">
            <circle cx="12" cy="12" r="12" fill="currentColor" />
            <circle cx="12" cy="9.7" r="4" fill="#fff" />
            <path d="M4.900 19.500C5.500 16 8 15 10 15h4c2 0 4.500 1 5.100 4.500A10.200 10.200 0 0 1 4.900 19.500Z" fill="#fff" />
          </svg>
        </button>
      </div>
    </header>
  );
};

const SymbolBar = () => {
  return (
    <div className="h-[42px] flex border border-[#e5e7eb] text-black">
      <div className="w-1/2 shrink-0 flex items-center justify-between pl-5 pr-px overflow-hidden">
        <span className="text-sm -mt-1">Symbol:</span>
        <div className="w-60 h-[42px] -mt-[6px] pt-[11px] px-[10px] border border-[#d1d5db] rounded-lg bg-[#f9fafb]">
          <div className="mr-2 h-5 pl-3 rounded bg-[#e1effe] text-[#1e429f] text-[13px] leading-5 whitespace-nowrap overflow-hidden">
            <button type="button" aria-label="Remove symbol">
              x
            </button>
            <span className="ml-2">CONTINUOUS E-MINI S&amp;P 500</span>
          </div>
        </div>
      </div>
      <div className="flex-1 border-l border-[#d1d5db] pl-3 text-xs leading-4">
        <p>Note: Data for current day is updated next day after 6AM ET. Suported: Stock, Future &amp; Forex.</p>
        <p>Note: If you see "No data", click on "Apply changes" again.</p>
      </div>
    </div>
  );
};

const Scrollbar = () => (
  <div className="w-4 shrink-0 h-full bg-[#f0f0f0] flex flex-col items-center pt-[7px] pb-2" aria-hidden="true">
    <svg viewBox="0 0 8 4" className="w-2 h-1" fill="#505050">
      <path d="M0 4L4 0L8 4Z" />
    </svg>
    <div className="w-full flex-1 pl-[2px] pr-px pt-[35px]">
      <div className="h-[63%] bg-[#c1c1c1]" />
    </div>
    <svg viewBox="0 0 8 4" className="w-2 h-1" fill="#505050">
      <path d="M0 0L4 4L8 0Z" />
    </svg>
  </div>
);

const App = () => {
  return (
    <div className="h-screen flex bg-white overflow-hidden font-[Inter,sans-serif]">
      <main className="flex-1 min-w-0 overflow-hidden">
        <Header />
        <SymbolBar />
        <div className="flex border-b border-[#e5e7eb]">
          <ChartPanel />
          <OrderPanel />
        </div>
        <div className="flex">
          <TradesTable />
          <ExecutionsTable />
        </div>
      </main>
      <Scrollbar />
    </div>
  );
};

export default App;
